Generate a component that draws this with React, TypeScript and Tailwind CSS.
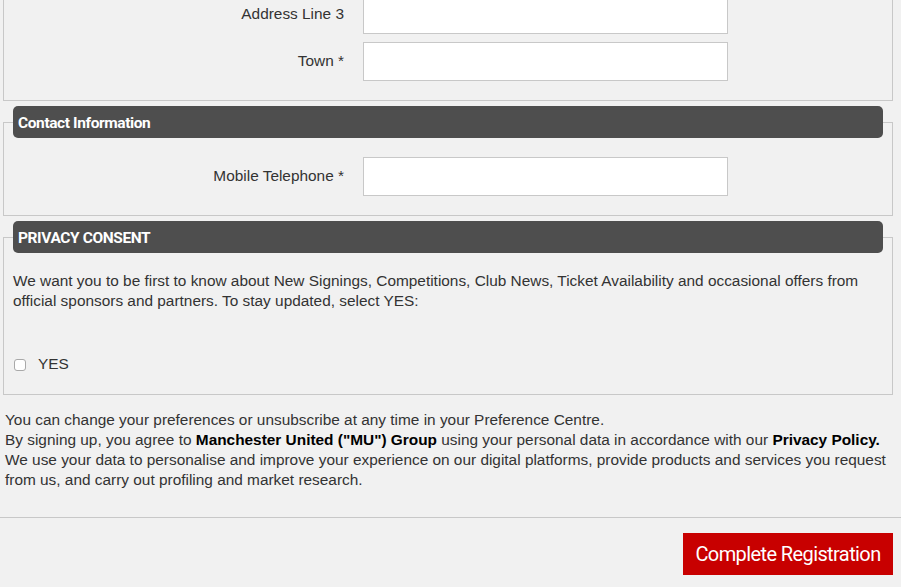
import React from "react";

function Row({ label, className = "" }: { label: string; className?: string }) {
  return (
    <div className={"flex items-center " + className}>
      <label className="w-[340px] text-right leading-5 -mt-[2px]">{label}</label>
      <input
        type="text"
        className="ml-[19px] w-[365px] h-[39px] bg-white border border-[#c8c8c8] outline-none"
      />
    </div>
  );
}

function Legend({ children }: { children: React.ReactNode }) {
  return (
    <div
      className="-mt-[17px] mx-[9px] h-[32px] rounded-[5px] bg-[#4e4e4e] text-white pl-[5px] pt-[2px] flex items-center text-[15.5px] font-bold tracking-[-0.4px]"
      style={{ fontFamily: "Roboto, 'Noto Sans', sans-serif" }}
    >
      {children}
    </div>
  );
}

export default function App() {
  return (
    <div
      className="min-h-screen bg-[#f1f1f1] text-[#333] text-[15.4px] leading-5 overflow-hidden"
      style={{ fontFamily: "'Liberation Sans', Arial, Helvetica, sans-serif" }}
    >
      <div className="h-[587px] overflow-hidden">
        {/* Address box */}
        <div className="-mt-[6px] ml-[3px] w-[890px] border border-[#c8c8c8] pb-[19px]">
          <Row label="Address Line 3" />
          <Row label="Town *" className="mt-2" />
        </div>

        {/* Contact Information */}
        <div className="mt-[21px] ml-[3px] w-[890px] border border-[#c8c8c8] pb-[19px]">
          <Legend>Contact Information</Legend>
          <Row label="Mobile Telephone *" className="mt-[19px]" />
        </div>

        {/* Privacy consent */}
        <div className="mt-[21px] ml-[3px] w-[890px] border border-[#c8c8c8] pb-[20px]">
          <Legend>PRIVACY CONSENT</Legend>
          <p className="mt-[18px] px-[9px]">
            We want you to be first to know about New Signings, Competitions, Club News, Ticket Availability and
            occasional offers from official sponsors and partners. To stay updated, select YES:
          </p>
          <label className="mt-[43px] ml-[10px] flex items-center h-5">
            <input
              type="checkbox"
              className="appearance-none w-[12px] h-[12px] bg-white border border-[#a9a9a9] rounded-[3px] mt-[1px]"
            />
            <span className="ml-[12px]">YES</span>
          </label>
        </div>

        {/* Footer text */}
        <div className="mt-[15px] pl-[5px] pr-[5px]">
          You can change your preferences or unsubscribe at any time in your Preference Centre.
          <br />
          By signing up, you agree to <b className="text-black">Manchester United ("MU") Group</b> using your
          personal data in accordance with our <b className="text-black">Privacy Policy.</b>
          <br />
          We use your data to personalise and improve your experience on our digital platforms, provide products and
          services you request from us, and carry out profiling and market research.
        </div>

        <div className="mt-[27px] h-px bg-[#c8c8c8]" />

        <div className="flex justify-end pr-[8px] mt-[15px]">
          <button
            className="w-[210px] h-[42px] bg-[#c80000] text-white text-[20px] tracking-[-0.6px]"
            style={{ fontFamily: "Roboto, 'Noto Sans', sans-serif" }}
          >
            Complete Registration
          </button>
        </div>
      </div>
    </div>
  );
}
